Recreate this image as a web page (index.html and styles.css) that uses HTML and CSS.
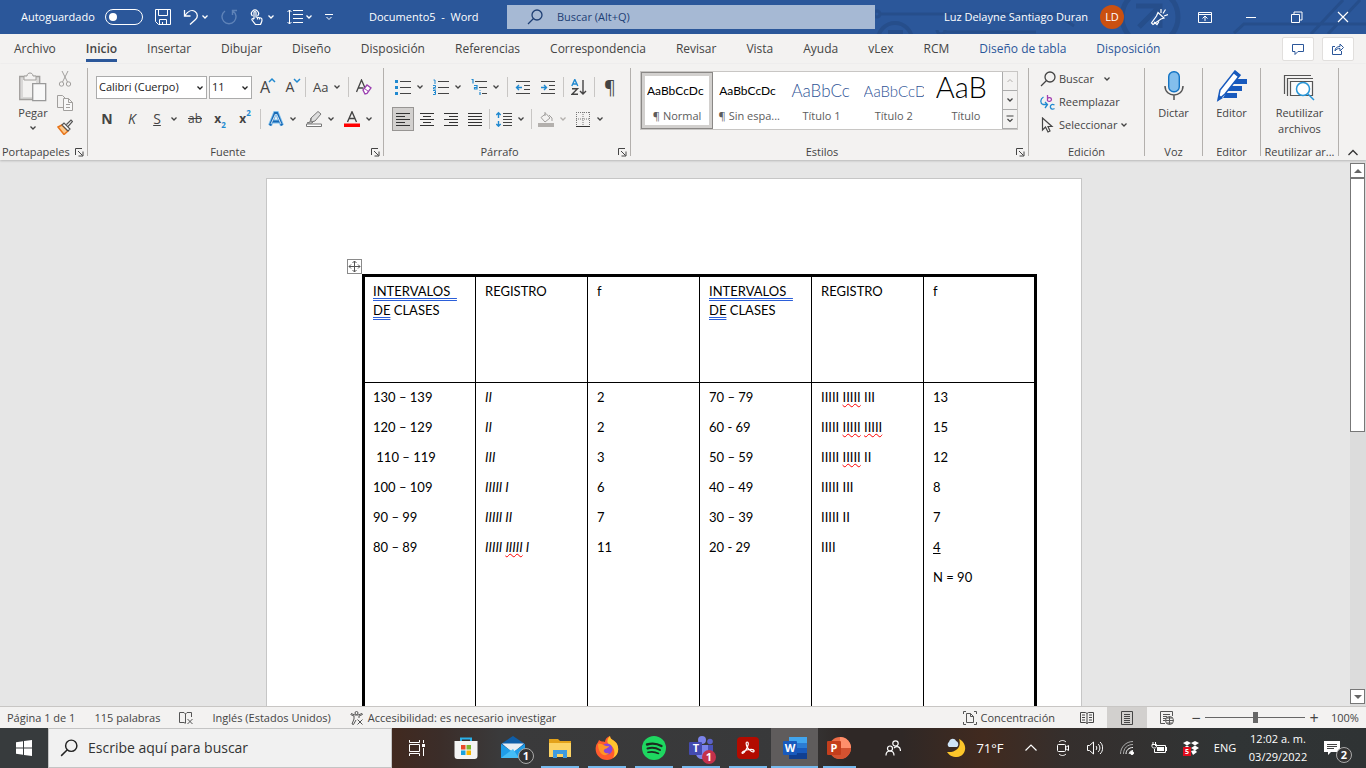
FILE: index.html
```html
<!DOCTYPE html>
<html lang="es">
<head>
<meta charset="utf-8">
<meta name="viewport" content="width=device-width, initial-scale=1">
<title>Documento5 - Word</title>
<link rel="stylesheet" href="styles.css">
</head>
<body>
<svg class="defs" aria-hidden="true">
  <symbol id="chev" viewBox="0 0 8 8"><path d="M1.500 2.500 4 5l2.500-2.500" fill="none" stroke="currentColor" stroke-width="1.300"/></symbol>
  <symbol id="launch" viewBox="0 0 9 9"><path d="M.5 7V.5H7M3 3l4.500 4.500M8 3.500V8H3.500" fill="none" stroke="currentColor"/></symbol>
  <symbol id="lens" viewBox="0 0 16 16"><circle cx="10" cy="6" r="5" fill="none" stroke="currentColor" stroke-width="1.300"/><path d="M6.500 9.500 1 15" stroke="currentColor" stroke-width="1.300"/></symbol>
</svg>

<header class="titlebar">
  <svg class="circuit" viewBox="0 0 500 34" preserveAspectRatio="xMaxYMid slice" fill="none" stroke="#264e8b" stroke-width="3" aria-hidden="true">
    <circle cx="11" cy="14" r="3"/><path d="M14 14H190l18 12M79 32H170M79 30a4 4 0 1 1-8 0M368 33l10-9H500M445 34l32-34M462 34l32-34"/>
    <circle cx="29" cy="40" r="17" stroke-width="4"/><path d="M22 32h15" stroke-width="4"/>
    <circle cx="284" cy="17" r="28" stroke-width="5"/><path d="M270 6h24v22M293 7l-20 20" stroke-width="5"/>
  </svg>
  <div class="quick">
    <label class="autosave">Autoguardado <input type="checkbox" class="toggle"></label>
    <button class="qb" aria-label="Guardar"><svg class="i16" viewBox="0 0 16 16" fill="none" stroke="#fff"><path d="M.5.500h15v15H3.500l-3-3zM3.500.500v6h9v-6M4.500 15.500v-5h7v5M7.500 15v-2"/></svg></button>
    <button class="qb split" aria-label="Deshacer"><svg class="i16" viewBox="0 0 16 16" fill="none" stroke="#fff" stroke-width="1.300"><path d="M1.500 1v6h6M2 6.500C5 2 9 .5 12 2.500s3 6 .5 8L7 15.500"/></svg><svg class="c8"><use href="#chev"/></svg></button>
    <button class="qb dim" aria-label="Rehacer"><svg class="i16" viewBox="0 0 16 16" fill="none" stroke="#5f83b8" stroke-width="1.400"><path d="M4 2a7 7 0 1 0 8 0M11.500 6V1.500H16"/></svg></button>
    <button class="qb split" aria-label="Modo mouse o táctil"><svg class="i16" viewBox="0 0 16 16" fill="none" stroke="#fff" stroke-width="1.200"><path d="M3.500 7a3.500 3.500 0 1 1 5 0M5 10V3.500a1 1 0 0 1 2 0V8l5 1c1 .3 1 1 1 2 0 2-1 3-1.500 4.500H6.500L3 11c-.5-1 .8-1.800 2-.8M8.500 8v2.500M10.500 8.500v2"/></svg><svg class="c8"><use href="#chev"/></svg></button>
    <button class="qb split" aria-label="Espaciado"><svg class="i16" viewBox="0 0 16 16" fill="none" stroke="#fff"><path d="M6 1.500h10M6 5.500h10M6 9.500h10M6 13.500h10M2.500 1v14M.5 3l2-2 2 2M.5 13l2 2 2-2"/></svg><svg class="c8"><use href="#chev"/></svg></button>
    <button class="qb" aria-label="Personalizar barra"><svg class="c8" viewBox="0 0 8 8" fill="none" stroke="#fff"><path d="M0 1.500h8M1.500 4 4 6.500 6.500 4"/></svg></button>
  </div>
  <div class="doc-name">Documento5&nbsp; - &nbsp;Word</div>
  <label class="search"><svg class="i16"><use href="#lens"/></svg><input type="text" placeholder="Buscar (Alt+Q)" aria-label="Buscar"></label>
  <div class="account">
    <span>Luz Delayne Santiago Duran</span><span class="avatar">LD</span>
    <button class="win" aria-label="Próximamente"><svg class="i18" viewBox="0 0 18 18" fill="none" stroke="#fff" stroke-width="1.200"><path d="M8 4.500 14 10l-3 1-8 5.500-1.500-1.500L6.500 8zM4 14l3 2.500 2-3M11 5V1M13 5.500l2.500-4M14 8l4-1.500"/></svg></button>
    <button class="win" aria-label="Opciones de presentación"><svg class="i14" viewBox="0 0 14 12" fill="none" stroke="#fff"><path d="M.5 1.500h13v10H.5zM.5 3.500h13M7 10V5M4.500 7.500 7 5l2.500 2.500"/></svg></button>
    <button class="win" aria-label="Minimizar"><svg class="i12" viewBox="0 0 12 12"><path d="M1 6.500h10" stroke="#fff"/></svg></button>
    <button class="win" aria-label="Restaurar"><svg class="i12" viewBox="0 0 12 12" fill="none" stroke="#fff"><path d="M.5 3.500h8v8h-8zM3 3V1h8v8H9"/></svg></button>
    <button class="win" aria-label="Cerrar"><svg class="i12" viewBox="0 0 12 12" fill="none" stroke="#fff" stroke-width="1.200"><path d="m1 1 10 10M11 1 1 11"/></svg></button>
  </div>
</header>

<nav class="tabs">
  <a href="#">Archivo</a><a href="#" class="active">Inicio</a><a href="#">Insertar</a><a href="#">Dibujar</a><a href="#">Diseño</a><a href="#">Disposición</a><a href="#">Referencias</a><a href="#">Correspondencia</a><a href="#">Revisar</a><a href="#">Vista</a><a href="#">Ayuda</a><a href="#">vLex</a><a href="#">RCM</a><a href="#" class="ctx">Diseño de tabla</a><a href="#" class="ctx">Disposición</a>
  <div class="tab-actions">
    <button aria-label="Comentarios"><svg class="i12" viewBox="0 0 12 12" fill="none" stroke="#2b579a"><path d="M.5 1.500h11v7H6l-3 3v-3H.5z"/></svg></button>
    <button aria-label="Compartir"><svg class="i12" viewBox="0 0 12 12" fill="none" stroke="#2b579a"><path d="M3 3.500H.5v8h9V8M3 8c0-3 2-4.500 5-4.500V1l3.500 3.500L8 8V5.500C6 5.500 4 6 3 8z"/></svg></button>
  </div>
</nav>

<section class="ribbon">
  <div class="group">
    <div class="body clip">
      <button class="big" aria-label="Pegar"><svg class="paste" viewBox="0 0 28 30" fill="none"><path d="M.7 4.500h20v23H.7z" fill="#d9d8d7" stroke="#a19f9d" stroke-width="1.300"/><path d="M4 8h13v17H4z" fill="#f3f2f1"/><path d="M5 4h3c0-4 6-4 6 0h3v4H5z" fill="#f3f2f1" stroke="#a19f9d"/><path d="M13.700 11.700h13v17h-13z" fill="#f8f8f8" stroke="#999" stroke-width="1.300"/></svg><span>Pegar</span><svg class="c8"><use href="#chev"/></svg></button>
      <div class="stack">
        <button aria-label="Cortar"><svg class="i16" viewBox="0 0 16 16" fill="none" stroke="#a19f9d"><path d="m5 0 5.500 11M11 0 5.500 11"/><circle cx="4.500" cy="13" r="2.200"/><circle cx="11.500" cy="13" r="2.200"/></svg></button>
        <button aria-label="Copiar"><svg class="i16" viewBox="0 0 16 16" fill="none" stroke="#a19f9d"><path d="M6 12.500H.5V.5h5l3 3"/><path d="M6.500 3.500h5l4 4v8h-9zM11.500 3.500v4h4M9 9.500h4M9 12.500h4" fill="#f8f8f8"/></svg></button>
        <button aria-label="Copiar formato"><svg class="i16" viewBox="0 0 16 16"><path d="m1 8 4-2 6 6-4 3.500z" fill="#fbc78a" stroke="#e8751a" stroke-width="1.500"/><path d="m5 6 2-2 6 6-2 2zM9.500 5.500 14 1l1.500 1.500L11 7.500" fill="#fff" stroke="#555" stroke-width="1.200"/></svg></button>
      </div>
    </div>
    <div class="caption">Portapapeles<button class="launch" aria-label="Más"><svg><use href="#launch"/></svg></button></div>
  </div>

  <div class="group">
    <div class="body rows font">
      <div class="row">
        <span class="combo family"><select aria-label="Fuente"><option>Calibri (Cuerpo)</option></select><svg class="c8"><use href="#chev"/></svg></span>
        <span class="combo size"><select aria-label="Tamaño"><option>11</option></select><svg class="c8"><use href="#chev"/></svg></span>
        <button class="glyph a-up" aria-label="Aumentar">A<svg class="c8 tip" viewBox="0 0 8 8"><path d="m1 5 3-3 3 3" fill="none" stroke="#2089d0" stroke-width="1.500"/></svg></button>
        <button class="glyph a-down" aria-label="Reducir">A<svg class="c8 tip" viewBox="0 0 8 8"><path d="m1 2 3 3 3-3" fill="none" stroke="#2089d0" stroke-width="1.500"/></svg></button>
        <i class="sep"></i>
        <button class="split case">Aa<svg class="c8"><use href="#chev"/></svg></button>
        <i class="sep"></i>
        <button aria-label="Borrar formato"><svg class="i16" viewBox="0 0 16 16" fill="none"><path d="M.5 13 5.500 1l4 9M2.500 9h5" stroke="#444" stroke-width="1.300"/><path d="m7 11 4-5 4 3-4 5.500-2 .5z" fill="#fff" stroke="#9b3fb0" stroke-width="1.300"/><path d="m8.500 9.500 4 3" stroke="#9b3fb0"/></svg></button>
      </div>
      <div class="row">
        <button class="glyph b">N</button><button class="glyph it">K</button>
        <button class="split glyphs"><u class="i16">S</u><svg class="c8"><use href="#chev"/></svg></button>
        <button class="glyph small"><s>ab</s></button>
        <button class="glyph b small">x<sub>2</sub></button><button class="glyph b small">x<sup>2</sup></button>
        <i class="sep"></i>
        <button class="split" aria-label="Efectos de texto"><svg class="i16" viewBox="0 0 16 16" fill="none"><path d="M2 14.500 7 2h2l5 12.500M4 10.500h8" stroke="#7fc0ee" stroke-width="4"/><path d="M2 14.500 7 2h2l5 12.500M4 10.500h8" stroke="#1769b5" stroke-width="2.200"/><path d="m3 13 4.500-10M8.500 3 13 13" stroke="#fff" stroke-width=".8"/></svg><svg class="c8"><use href="#chev"/></svg></button>
        <button class="split" aria-label="Resaltado"><svg class="i16" viewBox="0 0 16 16" fill="none" stroke="#777"><path d="m5 7 7-6.500 3 2.500-6 7-4 1z" fill="#ddd"/><path d="m5 7-1 4-3 1h5l2-2"/><path d="M.5 13h15v2.500H.5z" fill="#fff"/></svg><svg class="c8"><use href="#chev"/></svg></button>
        <button class="split" aria-label="Color de fuente"><svg class="i16" viewBox="0 0 16 16" fill="none"><path d="M3.500 11 8 .8 12.500 11M5 7.500h6" stroke="#444" stroke-width="1.400"/><path d="M0 12.500h16v3.500H0z" fill="#f00"/></svg><svg class="c8"><use href="#chev"/></svg></button>
      </div>
    </div>
    <div class="caption dialog">Fuente<button class="launch" aria-label="Más"><svg><use href="#launch"/></svg></button></div>
  </div>

  <div class="group">
    <div class="body rows para">
      <div class="row">
        <button class="split" aria-label="Viñetas"><svg class="i16" viewBox="0 0 16 16"><path d="M0 1h3v3H0zM0 7h3v3H0zM0 13h3v3H0z" fill="#2089d0"/><path d="M5 2.500h11M5 8.500h11M5 14.500h11" stroke="#444"/></svg><svg class="c8"><use href="#chev"/></svg></button>
        <button class="split" aria-label="Numeración"><svg class="i16" viewBox="0 0 16 16" fill="none"><path d="M.5 1H2v4M0 6.500h2.500v2H.5V10H3M0 11.500h2.500v4H0M1 13.500h1" stroke="#2089d0"/><path d="M5 2.500h11M5 8.500h11M5 14.500h11" stroke="#444"/></svg><svg class="c8"><use href="#chev"/></svg></button>
        <button class="split" aria-label="Lista multinivel"><svg class="i16" viewBox="0 0 16 16" fill="none"><path d="M.5.500H2v4M3 6.500h3V10H3.500V8.500H6M9 11v.8M9 13v3" stroke="#2089d0" stroke-width="1.200"/><path d="M4 2.500h12M8 8.500h8M11 14.500h5" stroke="#444"/></svg><svg class="c8"><use href="#chev"/></svg></button>
        <i class="sep"></i>
        <button aria-label="Disminuir sangría"><svg class="i16" viewBox="0 0 16 16" fill="none"><path d="M1 2.500h14M9 6.500h6M9 10.500h6M1 14.500h14" stroke="#444"/><path d="M7 8.500H1.500M4 6 1.500 8.500 4 11" stroke="#2089d0" stroke-width="1.400"/></svg></button>
        <button aria-label="Aumentar sangría"><svg class="i16" viewBox="0 0 16 16" fill="none"><path d="M1 2.500h14M9 6.500h6M9 10.500h6M1 14.500h14" stroke="#444"/><path d="M1 8.500h5.500M4 6l2.500 2.500L4 11" stroke="#2089d0" stroke-width="1.400"/></svg></button>
        <i class="sep"></i>
        <button aria-label="Ordenar"><svg class="i16" viewBox="0 0 16 16" fill="none" stroke-width="1.400"><path d="M.8 7 3.800.5 6.800 7M2 5h4" stroke="#2089d0"/><path d="M1 9.700h5.500L1 15.300h6M12 1v14M9 12l3 3 3-3" stroke="#444"/></svg></button>
        <i class="sep"></i>
        <button class="glyph pil">¶</button>
      </div>
      <div class="row tight">
        <button class="on" aria-label="Izquierda"><svg class="i16" viewBox="0 0 16 16" stroke="#333"><path d="M1 2.500h14M1 5.500h9M1 8.500h14M1 11.500h9M1 14.500h14"/></svg></button>
        <button aria-label="Centrar"><svg class="i16" viewBox="0 0 16 16" stroke="#333"><path d="M1 2.500h14M4 5.500h8M1 8.500h14M4 11.500h8M1 14.500h14"/></svg></button>
        <button aria-label="Derecha"><svg class="i16" viewBox="0 0 16 16" stroke="#333"><path d="M1 2.500h14M6 5.500h9M1 8.500h14M6 11.500h9M1 14.500h14"/></svg></button>
        <button aria-label="Justificar"><svg class="i16" viewBox="0 0 16 16" stroke="#333"><path d="M1 2.500h14M1 5.500h14M1 8.500h14M1 11.500h14M1 14.500h14"/></svg></button>
        <i class="sep"></i>
        <button class="split" aria-label="Interlineado"><svg class="i16" viewBox="0 0 16 16" fill="none"><path d="M7 2.500h9M7 5.500h9M7 8.500h9M7 11.500h9M7 14.500h9" stroke="#444"/><path d="M2.500 2v5M2.500 10v5M.3 4l2.200-2.200L4.700 4M.3 13l2.200 2.200L4.700 13" stroke="#2089d0" stroke-width="1.400"/></svg><svg class="c8"><use href="#chev"/></svg></button>
        <i class="sep"></i>
        <button class="split off" aria-label="Sombreado"><svg class="i16" viewBox="0 0 16 16" fill="none" stroke="#a19f9d"><path d="M7 1v4M3 6.500l5-4 4 4.500-5 4zM11 4l3 3v3"/><path d="M0 12h16v4H0z" fill="#b3b0ad" stroke="none"/></svg><svg class="c8"><use href="#chev"/></svg></button>
        <button class="split" aria-label="Bordes"><svg class="i16" viewBox="0 0 16 16" fill="none" stroke="#777"><path stroke-dasharray="1 1" d="M1 1.500h14M1.500 1v14M14.500 1v14M8 1v14M1 8h14"/><path d="M1 15.500h14" stroke="#333"/></svg><svg class="c8"><use href="#chev"/></svg></button>
      </div>
    </div>
    <div class="caption dialog">Párrafo<button class="launch" aria-label="Más"><svg><use href="#launch"/></svg></button></div>
  </div>

  <div class="group">
    <div class="body gal">
      <div class="gallery">
        <button class="style sel"><span class="pv">AaBbCcDc</span><span>¶ Normal</span></button>
        <button class="style"><span class="pv">AaBbCcDc</span><span>¶ Sin espa...</span></button>
        <button class="style"><span class="pv h1">AaBbCc</span><span>Título 1</span></button>
        <button class="style"><span class="pv h2">AaBbCcD</span><span>Título 2</span></button>
        <button class="style"><span class="pv ttl">AaB</span><span>Título</span></button>
        <div class="nav3"><button class="off" aria-label="Subir"><svg class="c8" viewBox="0 0 8 8"><path d="M1.500 5 4 2.500 6.500 5" fill="none" stroke="currentColor"/></svg></button><button aria-label="Bajar"><svg class="c8"><use href="#chev"/></svg></button><button aria-label="Más estilos"><svg class="c8" viewBox="0 0 8 8" fill="none" stroke="currentColor" stroke-width="1.200"><path d="M.5 1h7M1.500 4 4 6.500 6.500 4"/></svg></button></div>
      </div>
    </div>
    <div class="caption dialog">Estilos<button class="launch" aria-label="Más"><svg><use href="#launch"/></svg></button></div>
  </div>

  <div class="group">
    <div class="body edit">
      <button class="wide"><svg class="i16"><use href="#lens"/></svg>Buscar<svg class="c8"><use href="#chev"/></svg></button>
      <button><svg class="i16" viewBox="0 0 16 16" fill="none" stroke-width="1.300"><path d="M7.500 1v6M7.500 4.500c1-1.500 4-1 4 1s-3 2.500-4 1" stroke="#a33fb0"/><path d="M14.500 11c-3-1.500-4.500.5-4 2.500s2.500 2 4 1M3.500 3C0 5 0 9 3 10.500h4M5 8l2.500 2.500L5 14" stroke="#2089d0"/></svg>Reemplazar</button>
      <button><svg class="i16" viewBox="0 0 16 16" fill="none" stroke="#444" stroke-width="1.200"><path d="M2.500 1v12l3-3 2.500 5 2-1-2-4.500h4z"/></svg>Seleccionar<svg class="c8"><use href="#chev"/></svg></button>
    </div>
    <div class="caption">Edición</div>
  </div>

  <div class="group">
    <div class="body"><button class="big"><svg class="i32" viewBox="0 0 32 32" fill="none"><rect x="10.700" y="1.700" width="10.600" height="20" rx="5" fill="#83beec" stroke="#1474c4" stroke-width="1.400"/><path d="M7 16c0 12 18 12 18 0M16 25v5" stroke="#555" stroke-width="1.500"/></svg><span>Dictar</span></button></div>
    <div class="caption">Voz</div>
  </div>
  <div class="group">
    <div class="body"><button class="big"><svg class="i32" viewBox="0 0 32 32"><path d="M19 9h12v5H16zM15 16h11v5H11zM10 23h11v5H7z" fill="#185abd"/><path d="m2 30 2-10L19 1l5 4L9 24z" fill="#fff" stroke="#185abd" stroke-width="1.500"/><path d="m2 31 1-6 4 3zM17 3l2-2.500 5.500 4.500-2 2.500z" fill="#185abd"/></svg><span>Editor</span></button></div>
    <div class="caption">Editor</div>
  </div>
  <div class="group">
    <div class="body"><button class="big"><svg class="i32" viewBox="0 0 32 32" fill="none" stroke="#555" stroke-width="1.200"><path d="M1.500 24V5.500H28M4.500 26V8.500H30"/><path d="M7.500 11.500h22v14h-22z" fill="#fafafa"/><circle cx="20" cy="19" r="6.500" fill="#fff" stroke="#2796d8" stroke-width="1.500"/><path d="m25 24 6 6" stroke="#2796d8" stroke-width="1.500"/></svg><span>Reutilizar<br>archivos</span></button></div>
    <div class="caption">Reutilizar ar...</div>
  </div>
  <button class="collapse" aria-label="Contraer la cinta"><svg class="i12" viewBox="0 0 12 12"><path d="M1.500 8 6 3.500 10.500 8" fill="none" stroke="#333" stroke-width="1.300"/></svg></button>
</section>

<main class="workspace">
  <div class="canvas">
    <article class="page">
      <div class="table-box">
        <button class="handle" aria-label="Mover tabla"><svg viewBox="0 0 15 15" fill="none" stroke="#555"><path d="M7.500 2v11M2 7.500h11M5.500 4l2-2 2 2M5.500 11l2 2 2-2M4 5.500l-2 2 2 2M11 5.500l2 2-2 2"/></svg></button>
        <table class="freq">
          <colgroup><col class="first"><col span="4" class="mid"><col></colgroup>
          <thead><tr>
            <th><span class="gram">INTERVALOS&nbsp;&nbsp;</span> <span class="gram">DE</span> CLASES</th><th>REGISTRO</th><th>f</th>
            <th><span class="gram">INTERVALOS&nbsp;&nbsp;</span> <span class="gram">DE</span> CLASES</th><th>REGISTRO</th><th>f</th>
          </tr></thead>
          <tbody><tr>
            <td><p>130 – 139</p><p>120 – 129</p><p>&nbsp;110 – 119</p><p>100 – 109</p><p>90 – 99</p><p>80 – 89</p></td>
            <td class="it"><p>II</p><p>II</p><p>III</p><p>IIIII I</p><p>IIIII II</p><p>IIIII <span class="spell">IIIII</span> I</p></td>
            <td><p>2</p><p>2</p><p>3</p><p>6</p><p>7</p><p>11</p></td>
            <td><p>70 – 79</p><p>60 - 69</p><p>50 – 59</p><p>40 – 49</p><p>30 – 39</p><p>20 - 29</p></td>
            <td><p>IIIII <span class="spell">IIIII</span> III</p><p>IIIII <span class="spell">IIIII</span> <span class="spell">IIIII</span></p><p>IIIII <span class="spell">IIIII</span> II</p><p>IIIII III</p><p>IIIII II</p><p>IIII</p></td>
            <td><p>13</p><p>15</p><p>12</p><p>8</p><p>7</p><p><u>4</u></p><p>N = 90</p></td>
          </tr></tbody>
        </table>
      </div>
    </article>
  </div>
  <div class="scroll">
    <button aria-label="Arriba"><svg class="c8" viewBox="0 0 8 8"><path d="m0 6 4-4 4 4z" fill="#666"/></svg></button>
    <div class="thumb"></div>
    <button class="down" aria-label="Abajo"><svg class="c8" viewBox="0 0 8 8"><path d="m0 2 4 4 4-4z" fill="#666"/></svg></button>
  </div>
</main>

<footer class="status">
  <span>Página 1 de 1</span><span>115 palabras</span>
  <svg class="i14" viewBox="0 0 14 14" fill="none" stroke="#555"><path d="M6.500 12.500 5 11.500H.5v-10H5L6.500 3 8 1.500h4.500V6M6.500 3v9M8.500 8l5 5M13.500 8l-5 5"/></svg>
  <span>Inglés (Estados Unidos)</span>
  <span class="acc"><svg class="i14" viewBox="0 0 14 14" fill="none" stroke="#555"><circle cx="6.500" cy="2" r="1.500"/><path d="M.5 3.500 4 5v3l-2 5 1.500.5L6 9M1 2.500l4 1.500h3l4-1.500.5 1L9 5v2M7.500 8.500l5 5M12.500 8.500l-5 5"/></svg>Accesibilidad: es necesario investigar</span>
  <span class="focus"><svg class="i14" viewBox="0 0 14 14" fill="none" stroke="#555"><path d="M3 .5H.5V3M11 .5h2.500V3M3 13.500H.5V11M11 13.500h2.500V11M3.500 2.500h4l3 3v6h-7zM7.500 2.500v3h3"/></svg>Concentración</span>
  <button class="view" aria-label="Lectura"><svg class="i14" viewBox="0 0 14 14" fill="none" stroke="#444"><path d="M7 2.500 5.500 1.500h-5v10h5L7 12.500l1.500-1h5v-10h-5zM7 2.500v10M2 4h3M2 6.500h3M2 9h3M9 4h3M9 6.500h3M9 9h3"/></svg></button>
  <button class="view on" aria-label="Impresión"><svg class="i14" viewBox="0 0 14 14" fill="none" stroke="#444"><path d="M1.500.500h11v13h-11zM4 3.500h6M4 5.500h6M4 7.500h6M4 9.500h6M4 11.500h6"/></svg></button>
  <button class="view" aria-label="Web"><svg class="i14" viewBox="0 0 14 14" fill="none" stroke="#555"><path d="M5 12.500H.5V.5h12V5M3 3.500h7M3 5.500h4M3 7.500h3M3 9.500h2"/><circle cx="9.500" cy="9.500" r="4"/><path d="M5.500 9.500h8M9.500 5.500v8M7 7h5M7 12h5"/></svg></button>
  <span class="zoom"><button aria-label="Alejar">−</button><input type="range" min="0" max="100" value="50" aria-label="Zoom"><button aria-label="Acercar">+</button></span>
  <span class="pct">100%</span>
</footer>

<div class="taskbar">
  <button class="start" aria-label="Inicio"><svg class="i16" viewBox="0 0 16 16" fill="#fff"><path d="m0 2.200 7-1v6.300H0zM8 1l8-1v7.500H8zM0 8.500h7v6.300l-7-1zM8 8.500h8V16l-8-1z"/></svg></button>
  <label class="finder"><svg class="i18"><use href="#lens"/></svg><input type="text" placeholder="Escribe aquí para buscar" aria-label="Buscar en Windows"></label>
  <button class="tv" aria-label="Vista de tareas"><svg class="i18" viewBox="0 0 18 18" fill="none" stroke="#fff"><path d="M1.500 5.500h10v7h-10zM1.500 1v2.500h10V1M1.500 17v-2.500h10V17M15.500 1v3M15.500 9v8"/><path d="M14 5h3v3h-3z" fill="#fff" stroke="none"/></svg></button>
  <button class="app" aria-label="Store"><svg class="i24" viewBox="0 0 24 24"><path d="M7 7V2.500h10V7" fill="none" stroke="#2ab0e8" stroke-width="2"/><path d="M.5 5h23v15a3 3 0 0 1-3 3h-17a3 3 0 0 1-3-3z" fill="#f4f4f4"/><path d="M7 9h4.500v4.500H7z" fill="#e8492a"/><path d="M12.500 9H17v4.500h-4.500z" fill="#7db72f"/><path d="M7 14.500h4.500V19H7z" fill="#18a2e0"/><path d="M12.500 14.500H17V19h-4.500z" fill="#f7b500"/></svg></button>
  <button class="app" aria-label="Correo"><svg class="i24" viewBox="0 0 24 24"><path d="M0 8 12 0l12 8v3H0z" fill="#0f5ea8"/><path d="M1 7.500h22L12 17z" fill="#e9eef4"/><path d="m0 8 12 8 12-8v14H0z" fill="#1f9de8"/><path d="m0 22 12-9 6 9z" fill="#45bdf5"/></svg><b class="badge ring">1</b></button>
  <button class="app open" aria-label="Explorador"><svg class="i24" viewBox="0 0 24 24"><path d="M1 3h9l2 2h11v16H1z" fill="#e3a21a"/><path d="M1 7h22v14H1z" fill="#fbd365"/><path d="M5 22v-8h14v8h-4v-4H9v4z" fill="#3d9be0"/></svg></button>
  <button class="app open" aria-label="Firefox"><svg class="i24" viewBox="0 0 24 24"><path d="M4 4c2 2 4 1 6 2 0-3 2-5 5-6 0 4 5 4 7 8 4 9-3 16-10 16S-1 18 1 10c0-2 2-3 3-6z" fill="#ff5b2e"/><path d="M15 0c0 4 5 4 7 8 3 6 0 12-4 14 3-6 1-11-3-13-4-2-3-6 0-9z" fill="#ffc52e"/><circle cx="12" cy="13" r="5.500" fill="#8a46d8"/><path d="M3 8c5-1 6 3 11 2-1 3-4 2-5 4s2 4 5 3c-4 5-11 1-11-9z" fill="#ff9525"/></svg></button>
  <button class="app open" aria-label="Spotify"><svg class="i24" viewBox="0 0 24 24" fill="none" stroke="#1b2b20" stroke-linecap="round"><circle cx="12" cy="12" r="12" fill="#1ed760" stroke="none"/><path d="M5 8.500c5-1.500 10-1 14.500 1.500" stroke-width="2.400"/><path d="M5.500 12.500c4-1.200 8.500-.8 12.500 1.500" stroke-width="2"/><path d="M6 16.300c4-.9 7-.6 10.500 1.200" stroke-width="1.600"/></svg></button>
  <button class="app open" aria-label="Teams"><svg class="i24" viewBox="0 0 24 24"><circle cx="21" cy="5.500" r="2.800" fill="#5b62c8"/><circle cx="13" cy="4" r="4" fill="#7b83eb"/><path d="M17 9h7v8c0 3-4 4-6 2z" fill="#4a52b8"/><path d="M7 9h12v8c0 8-12 8-12 0z" fill="#7b83eb"/><rect y="6" width="13" height="13" rx="1" fill="#444bb0"/></svg><b class="letter">T</b><b class="badge red">1</b></button>
  <button class="app open" aria-label="Acrobat"><svg class="i24" viewBox="0 0 24 24"><rect x="1" y="1" width="22" height="22" rx="4" fill="#b30b00"/><path d="M11 6c2.500 0 1 5-1.500 8.500C8 17 6.500 18 6 17s3.500-3 7.500-3.500 5 .8 4.500 2-4.500-.8-6.500-4S10 6 11 6z" fill="none" stroke="#fff" stroke-width="1.200"/></svg></button>
  <button class="app open current" aria-label="Word"><svg class="i24" viewBox="0 0 24 24"><path d="M6 1h18v6H6z" fill="#41a5ee"/><path d="M6 7h18v5H6z" fill="#2b7cd3"/><path d="M6 12h18v5H6z" fill="#185abd"/><path d="M6 17h18v6H6z" fill="#103f91"/><rect y="5" width="14" height="14" rx="1" fill="#185abd"/></svg><b class="letter">W</b></button>
  <button class="app open" aria-label="PowerPoint"><svg class="i24" viewBox="0 0 24 24"><circle cx="13" cy="12" r="11" fill="#ed6c47"/><path d="M13 1a11 11 0 0 1 11 11H13z" fill="#ff8f6b"/><path d="M2 12h22a11 11 0 0 1-22 0z" fill="#d35230"/><rect y="5" width="14" height="14" rx="1" fill="#c43e1c"/></svg><b class="letter">P</b></button>
  <button class="people" aria-label="Contactos"><svg class="i16" viewBox="0 0 16 16" fill="none" stroke="#fff" stroke-width="1.200"><circle cx="10.500" cy="3.500" r="2.700"/><circle cx="5" cy="8.500" r="2.500"/><path d="M1 15.500c0-6 8-6 8 0M9 8c3-3 6.500-1 6.500 3"/></svg></button>
  <div class="tray">
    <button class="weather"><svg class="i20" viewBox="0 0 20 20"><path d="M13 1c9 4 8 17-2 18-5 0-8-2-10-5 9 1 15-5 12-13z" fill="#fcc62a"/><path d="M3 9a3 3 0 0 1 0-5c1-4 6-4 7-1 3 1 3 6 0 6z" fill="#cfe4f7"/></svg>71°F</button>
    <button class="tr" aria-label="Iconos ocultos"><svg class="i12" viewBox="0 0 12 12"><path d="m.5 8.500 5.500-5.500 5.500 5.500" fill="none" stroke="#fff" stroke-width="1.200"/></svg></button>
    <button class="tr" aria-label="Cámara"><svg class="i16" viewBox="0 0 16 16" fill="none" stroke="#fff"><rect x="2.500" y="4.500" width="8" height="7" rx="1"/><path d="m10.500 7.500 3-2v5l-3-2M4 2c2-2 5-2 7 0M4 14c2 2 5 2 7 0"/></svg></button>
    <button class="tr" aria-label="Volumen"><svg class="i16" viewBox="0 0 16 16" fill="none" stroke="#fff"><path d="M.5 5.500h2l4-3.500v12l-4-3.500h-2zM9 6c1 1 1 3 0 4M11 4c2.500 2 2.500 6 0 8M13 2c3.500 3 3.500 9 0 12"/></svg></button>
    <button class="tr" aria-label="Wi-Fi"><svg class="i14" viewBox="0 0 14 14" fill="none" stroke="#fff"><path d="M9 13a4 4 0 0 1 4-3.500M6 13c0-4 3-6.500 7-6.500"/><path d="M3.500 13c0-6 4-9.500 9.500-9.500M.5 13C.5 6 6 .5 13 .5" stroke="#aaa"/><circle cx="12" cy="12" r="1.500" fill="#fff"/></svg></button>
    <button class="tr" aria-label="Batería"><svg class="i16" viewBox="0 0 16 16" fill="none" stroke="#fff"><path d="M4 5.500h10.500v7H3.500V9M15.500 7v4M1 4.500h4.500v2c0 2-4.500 2-4.500 0zM2 2v2M4.500 2v2"/><path d="M6 7h7v4H6z" fill="#fff" stroke="none"/></svg></button>
    <button class="tr" aria-label="Dropbox"><svg class="i16" viewBox="0 0 16 16"><path d="m4 1 4 2-4 2.500L0 3zM12 1l4 2-4 2.500L8 3zM4 5.500 8 8l-4 2.500L0 8zM12 5.500 16 8l-4 2.500L8 8zM8 11l4-1 2 2-4 3z" fill="#fff"/><path d="M0 7h8v9H0z" fill="#e00b1c"/></svg><b class="five">5</b></button>
    <span class="lang">ENG</span>
    <time class="clock">12:02 a. m.<br>03/29/2022</time>
    <button class="notif" aria-label="Notificaciones"><svg class="i16" viewBox="0 0 16 16"><path d="M0 1h16v11H7l-3 3v-3H0z" fill="#fff"/><path d="M3 4.500h10M3 6.500h10M3 8.500h7" stroke="#444"/></svg><b class="badge ring">2</b></button>
  </div>
</div>
</body>
</html>
```

FILE: styles.css
```css
* { box-sizing: border-box; }
body {
  margin: 0; height: 100vh; display: flex; flex-direction: column; overflow: hidden;
  font: 11px/16px "Open Sans", "Segoe UI", sans-serif; color: #444; background: #e6e6e6;
}
button { border: 0; padding: 0; background: none; font: inherit; color: inherit; display: flex; align-items: center; justify-content: center; }
input, select { font: inherit; color: inherit; }
svg { display: block; flex: none; }
p { margin: 0; }
.defs { position: absolute; width: 0; height: 0; }
.c8 { width: 8px; height: 8px; }
.i12 { width: 12px; height: 12px; }
.i14 { width: 14px; height: 14px; }
.i16 { width: 16px; height: 16px; }
.i18 { width: 18px; height: 18px; }
.i20 { width: 20px; height: 20px; }
.i24 { width: 24px; height: 24px; }
.i32 { width: 32px; height: 32px; }
.split { gap: 5px; }
.off { color: #b3b0ad; }

/* Title bar */
.titlebar { position: relative; flex: none; height: 34px; display: grid; grid-template-columns: 369px 138px minmax(0, 1fr) 491px; align-items: center; background: #2b579a; color: #fff; }
.titlebar > * { position: relative; }
.titlebar > .circuit { position: absolute; right: 0; top: 0; width: 500px; height: 34px; }
.quick { display: flex; align-items: center; gap: 12px; padding-left: 21px; }
.quick .split { gap: 2px; }
.autosave { display: flex; align-items: center; gap: 10px; }
.toggle { appearance: none; margin: 0; width: 38px; height: 16px; border: 1px solid #fff; border-radius: 8px; display: flex; align-items: center; padding-left: 3px; }
.toggle::before { content: ""; width: 8px; height: 8px; border-radius: 50%; background: #fff; }
.search { height: 24px; display: flex; align-items: center; gap: 14px; padding: 0 20px; background: #a6b9d4; color: #1e3f74; }
.search input { flex: 1; min-width: 0; border: 0; padding: 0; background: none; }
.search input::placeholder { color: #1e3f74; opacity: 1; }
.account { display: flex; align-items: center; justify-content: flex-end; }
.avatar { width: 24px; height: 24px; margin: 0 12px; border-radius: 50%; background: #ca5010; text-align: center; line-height: 24px; }
.win { width: 46px; height: 34px; }

/* Tabs */
.tabs { flex: none; height: 30px; display: flex; align-items: stretch; gap: 30px; padding: 0 12px 0 14px; background: #f3f2f1; font-size: 12px; line-height: 30px; }
.tabs a { color: #444; text-decoration: none; white-space: nowrap; }
.tabs .active { font-weight: 600; border-bottom: 3px solid #2b579a; height: 28px; }
.tabs .ctx { color: #2b579a; }
.tab-actions { margin-left: auto; display: flex; align-items: center; gap: 8px; }
.tab-actions button { width: 32px; height: 24px; background: #fff; border: 1px solid #e1dfdd; border-radius: 2px; }

/* Ribbon */
.ribbon { position: relative; z-index: 1; flex: none; height: 96px; display: grid; grid-template-columns: 88px 296px 247px minmax(0, 1fr) 116px 58px 58px 78px 27px; padding: 4px 0; background: #f3f2f1; box-shadow: 0 1px 2px #b8b8b8; }
.group { display: flex; flex-direction: column; border-right: 1px solid #b3b0ad; min-width: 0; }
.body { flex: 1; display: flex; justify-content: center; }
.caption { position: relative; height: 16px; margin-bottom: -4px; text-align: center; white-space: nowrap; }
.caption.dialog { padding-right: 15px; }
.group:first-child .caption { text-align: left; padding-left: 2px; }
.launch { position: absolute; right: 3px; top: 4px; }
.launch svg { width: 9px; height: 9px; }
.big { flex-direction: column; justify-content: flex-start; line-height: 16px; padding-top: 2px; }
.big > svg + span { margin-top: 3px; }
.big .paste { width: 28px; height: 30px; margin: 2px 0 0; }
.big .c8 { margin-top: 3px; }
.clip { gap: 9px; padding-left: 4px; }
.stack { display: flex; flex-direction: column; gap: 8px; padding-top: 3px; }
.rows { flex-direction: column; justify-content: flex-start; gap: 8px; padding-top: 7px; }
.row { display: flex; align-items: center; gap: 9px; height: 24px; }
.row.tight { gap: 8px; }
.font .row + .row, .para .row { padding-left: 11px; }
.font .row:first-child { padding-left: 8px; }
.sep { width: 1px; height: 20px; margin: 0 -2px; background: #c8c6c4; }
.combo { position: relative; display: flex; align-items: center; height: 23px; background: #fff; border: 1px solid #ababab; color: #222; }
.combo select { appearance: none; width: 100%; border: 0; padding: 0 2px; background: none; }
.combo .c8 { position: absolute; right: 2px; top: 7px; pointer-events: none; }
.family { width: 111px; }
.size { width: 43px; margin-left: -7px; }
.size + .glyph { margin-left: -4px; }
.glyph { position: relative; width: 16px; height: 20px; font-size: 14px; line-height: 20px; }
.glyph.b { font-weight: 700; }
.glyph.it { font-style: italic; }
.glyph.small { font-size: 12px; }
.glyph sub, .glyph sup { font-size: 8px; line-height: 8px; color: #2089d0; }
.glyph sub { align-self: flex-end; }
.glyph sup { align-self: flex-start; }
.glyph.a-up { font-size: 16px; }
.tip { position: absolute; right: -3px; top: 0; }
.case { font-size: 13px; }
.glyphs .i16 { font-size: 14px; text-align: center; }
.pil { font-size: 18px; }
.on { width: 22px; height: 24px; margin: 0 -3px; background: #d2d0ce; border: 1px solid #979593; }
.gal { align-items: flex-start; padding: 3px 10px 0 9px; }
.gallery { flex: 1; display: flex; height: 59px; background: #fff; border: 1px solid #c8c6c4; min-width: 0; }
.style { flex: 1 1 0; min-width: 0; flex-direction: column; color: #5c5c5c; padding: 0 6px; white-space: nowrap; }
.style span + span { margin-top: 7px; }
.sel { outline: 1px solid #8a8886; outline-offset: -1px; box-shadow: inset 0 0 0 4px #d2d0ce; }
.pv { width: 100%; height: 24px; overflow: hidden; text-align: left; font: 12px/28px Lato, sans-serif; color: #000; }
.h1 { font-size: 17px; font-weight: 300; color: #2f5496; }
.h2 { font-size: 15px; font-weight: 300; color: #2f5496; }
.ttl { font-size: 29px; line-height: 20px; font-weight: 300; }
.nav3 { width: 15px; display: flex; flex-direction: column; }
.nav3 button { flex: 1; background: #f3f2f1; border: 1px solid #ababab; border-width: 0 0 1px 1px; }
.edit { flex-direction: column; justify-content: flex-start; gap: 7px; padding: 3px 0 0 11px; }
.edit button { justify-content: flex-start; gap: 3px; height: 16px; }
.edit .wide .c8 { margin-left: 6px; }
.collapse { align-self: end; height: 14px; margin-bottom: -4px; }

/* Document */
.workspace { flex: 1; min-height: 0; display: flex; overflow: hidden; }
.canvas { flex: 1; display: flex; justify-content: center; align-items: flex-start; padding-top: 18px; }
.page { flex: none; width: 816px; min-height: 1056px; padding: 95px; background: #fff; border: 1px solid #c6c6c6; }
.table-box { position: relative; }
.handle { position: absolute; left: -15px; top: -15px; width: 15px; height: 15px; border: 1px solid #8a8a8a; background: #fff; }
.handle svg { width: 15px; height: 15px; }
.freq { width: 675px; table-layout: fixed; border: 3px solid #000; border-spacing: 0; color: #000; font: 13px/19px Lato, "Liberation Sans", sans-serif; }
.freq .first { width: 111px; }
.freq .mid { width: 112px; }
.freq th, .freq td { padding: 5px 8px; vertical-align: top; text-align: left; font-weight: 400; border-right: 1px solid #000; }
.freq th + th, .freq td + td { padding-left: 9px; }
.freq th:last-child, .freq td:last-child { border-right: 0; }
.freq th { height: 106px; border-bottom: 1px solid #000; }
.freq td { height: 600px; }
.freq p { margin-bottom: 11px; }
.freq .it { font-style: italic; }
.gram { text-decoration: underline double #2b5fd9 1px; text-underline-offset: 2px; text-decoration-skip-ink: none; }
.spell { text-decoration: underline wavy #f00 1px; text-underline-offset: 1px; text-decoration-skip-ink: none; }
.scroll { width: 18px; display: flex; flex-direction: column; padding: 3px 1px 2px 2px; background: linear-gradient(90deg, #e6e6e6 2px, #dcdcdc 2px); }
.scroll button { flex: none; height: 15px; background: #fff; border: 1px solid #777; }
.thumb { height: 47%; background: #fff; border: 1px solid #777; }
.scroll .down { margin-top: auto; }

/* Status bar */
.status { flex: none; height: 22px; display: flex; align-items: center; padding-left: 7px; gap: 19px; background: #f3f2f1; border-top: 1px solid #c8c6c4; white-space: nowrap; }
.acc, .focus, .zoom { display: flex; align-items: center; gap: 4px; }
.focus { margin-left: auto; }
.view { width: 40px; height: 21px; margin-left: -19px; }
.focus + .view { margin-left: -7px; }
.view.on { margin-right: 0; background: #d2d0ce; border: 0; }
.zoom { margin-left: -15px; }
.zoom button { font-size: 16px; width: 10px; }
.zoom input { appearance: none; width: 100px; height: 11px; margin: 0; background: linear-gradient(#666, #666) center / 100% 1px no-repeat; }
.zoom input::-webkit-slider-thumb { appearance: none; width: 5px; height: 11px; background: #666; }
.pct { width: 35px; margin-left: -7px; }

/* Taskbar */
.taskbar { flex: none; height: 40px; display: flex; background: linear-gradient(90deg, #373b3d 0 48px, #41291f 392px, #3b2d29 440px, #3a3a3b 500px, #38393a 58%, #2f2826 62%, #2f2826 66%, #412a1f 72%, #352f2d 78%, #303435 90%, #2f3334); color: #fff; }
.start { width: 48px; }
.finder { width: 344px; display: flex; align-items: center; gap: 10px; padding: 0 10px 0 11px; background: #f1f1f1; border: 1px solid #c4c4c4; color: #222; font-size: 14px; }
.finder input { flex: 1; min-width: 0; border: 0; padding: 0; background: none; }
.finder input::placeholder { color: #333; opacity: 1; }
.tv { width: 50px; }
.app { position: relative; width: 47px; }
.open::after { content: ""; position: absolute; left: 5px; right: 4px; bottom: 0; height: 2px; background: #76b9ed; }
.current { background: #5f5c5c; }
.current::after { left: 0; right: 0; }
.current + .app { width: 42px; }
.current + .app .letter { left: 9px; }
.badge { position: absolute; right: 2px; bottom: 4px; width: 16px; height: 16px; border-radius: 50%; font: 700 11px/16px "Open Sans", sans-serif; text-align: center; }
.ring { background: #333; border: 1px solid #aaa; line-height: 14px; }
.red { background: #c4314b; right: 8px; width: 14px; height: 14px; line-height: 14px; }
.letter { position: absolute; left: 12px; top: 12px; width: 14px; font: 700 11px/16px "Open Sans", sans-serif; text-align: center; }
.people { width: 66px; }
.tray { margin-left: auto; display: flex; align-items: center; padding-right: 4px; }
.tray button { height: 40px; }
.tray .weather { width: 75px; padding-right: 5px; gap: 10px; font-size: 13px; }
.tr { position: relative; width: 32px; }
.five { position: absolute; left: 8px; bottom: 12px; width: 8px; font-size: 7px; line-height: 9px; }
.lang { width: 36px; text-align: center; }
.clock { width: 70px; text-align: center; line-height: 18px; }
.tray .notif { position: relative; width: 49px; padding-right: 12px; }
.notif .badge { right: 10px; bottom: 5px; }
```
